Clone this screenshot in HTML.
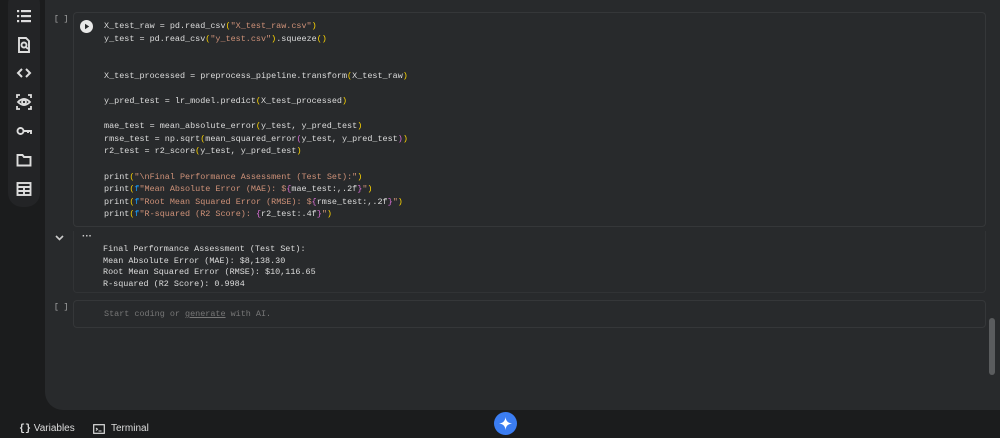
<!DOCTYPE html>
<html><head><style>
body{margin:0;width:1000px;height:438px;background:#1b1c1d;position:relative;overflow:hidden;font-family:"Liberation Sans",sans-serif}
.side{position:absolute;left:8px;top:-10px;width:32px;height:217px;background:#232426;border-radius:14px}
.ic{position:absolute;left:16px;width:16px;height:16px}
.main{position:absolute;left:45px;top:0;width:960px;height:410px;background:#282a2c;border-radius:0 0 0 18px}
.mono{font-family:"Liberation Mono",monospace;font-size:8.45px;color:#dcdcdc;white-space:pre}
.cell{position:absolute;left:73px;top:12px;width:911px;height:213px;border:1px solid #353739;border-radius:4px}
.code{position:absolute;left:104px;top:20px;line-height:12.55px}
.s{color:#ce9178}.y{color:#ffd700}.p{color:#da70d6}.b{color:#179fff}
.out{position:absolute;left:103px;top:244px;line-height:11.6px}
.br{position:absolute;font-family:"Liberation Mono",monospace;font-size:8px;color:#aaa}
</style></head><body>
<div class="side"></div>
<svg class="ic" style="top:8px" viewBox="0 0 16 16" fill="#ddd"><rect x="1" y="2" width="2.2" height="2.2"/><rect x="5" y="2" width="10" height="2.2"/><rect x="1" y="7" width="2.2" height="2.2"/><rect x="5" y="7" width="10" height="2.2"/><rect x="1" y="12" width="2.2" height="2.2"/><rect x="5" y="12" width="10" height="2.2"/></svg>
<svg class="ic" style="top:37px" viewBox="0 0 16 16" fill="none" stroke="#ddd" stroke-width="1.9"><path d="M3 1h7l3 3v11H3z"/><circle cx="8" cy="8" r="2.5"/><path d="M10 10l2 2"/></svg>
<svg class="ic" style="top:65px" viewBox="0 0 16 16" fill="none" stroke="#ddd" stroke-width="2"><path d="M6 4L2 8l4 4M10 4l4 4-4 4"/></svg>
<svg class="ic" style="top:94px" viewBox="0 0 16 16" fill="none" stroke="#ddd" stroke-width="1.8"><path d="M1 4V1h3M12 1h3v3M15 12v3h-3M4 15H1v-3"/><path d="M2 8q6-6 12 0q-6 6-12 0z"/><circle cx="8" cy="8" r="2"/></svg>
<svg class="ic" style="top:123px" viewBox="0 0 16 16" fill="none" stroke="#ddd" stroke-width="1.9"><circle cx="4.5" cy="8" r="3"/><path d="M7.5 8H15v3M12 8v2"/></svg>
<svg class="ic" style="top:152px" viewBox="0 0 16 16" fill="none" stroke="#ddd" stroke-width="1.9"><path d="M1.5 3h5l1.5 2h6.5v8.5h-13z"/></svg>
<svg class="ic" style="top:181px" viewBox="0 0 16 16" fill="none" stroke="#ddd" stroke-width="1.9"><rect x="1.5" y="2" width="13" height="12"/><path d="M1.5 6h13M1.5 10h13M8 6v8"/></svg>
<div class="main"></div>
<div class="br" style="left:54px;top:15px">[ ]</div>
<div class="cell"></div>
<svg style="position:absolute;left:80px;top:20px" width="13" height="13" viewBox="0 0 13 13"><circle cx="6.5" cy="6.5" r="6.5" fill="#e8e8e8"/><path d="M5 3.8v5.4l4.2-2.7z" fill="#282a2c"/></svg>
<div class="mono code">X_test_raw = pd.read_csv<span class="y">(</span><span class="s">"X_test_raw.csv"</span><span class="y">)</span>
y_test = pd.read_csv<span class="y">(</span><span class="s">"y_test.csv"</span><span class="y">)</span>.squeeze<span class="y">()</span>


X_test_processed = preprocess_pipeline.transform<span class="y">(</span>X_test_raw<span class="y">)</span>

y_pred_test = lr_model.predict<span class="y">(</span>X_test_processed<span class="y">)</span>

mae_test = mean_absolute_error<span class="y">(</span>y_test, y_pred_test<span class="y">)</span>
rmse_test = np.sqrt<span class="y">(</span>mean_squared_error<span class="p">(</span>y_test, y_pred_test<span class="p">)</span><span class="y">)</span>
r2_test = r2_score<span class="y">(</span>y_test, y_pred_test<span class="y">)</span>

print<span class="y">(</span><span class="s">"\nFinal Performance Assessment (Test Set):"</span><span class="y">)</span>
print<span class="y">(</span><span class="b">f</span><span class="s">"Mean Absolute Error (MAE): $</span><span class="p">{</span>mae_test:,.2f<span class="p">}</span><span class="s">"</span><span class="y">)</span>
print<span class="y">(</span><span class="b">f</span><span class="s">"Root Mean Squared Error (RMSE): $</span><span class="p">{</span>rmse_test:,.2f<span class="p">}</span><span class="s">"</span><span class="y">)</span>
print<span class="y">(</span><span class="b">f</span><span class="s">"R-squared (R2 Score): </span><span class="p">{</span>r2_test:.4f<span class="p">}</span><span class="s">"</span><span class="y">)</span></div>
<div style="position:absolute;left:73px;top:231px;width:911px;height:61px;border:1px solid #313335;border-top:none;border-radius:0 0 4px 4px"></div>
<svg style="position:absolute;left:55px;top:235px" width="9" height="6" viewBox="0 0 9 6"><path d="M1 1l3.5 3.5L8 1" stroke="#ccc" stroke-width="1.6" fill="none"/></svg>
<div style="position:absolute;left:82px;top:231px;color:#ccc;font-size:10px;font-weight:bold">···</div>
<div class="mono out">Final Performance Assessment (Test Set):
Mean Absolute Error (MAE): $8,138.30
Root Mean Squared Error (RMSE): $10,116.65
R-squared (R2 Score): 0.9984</div>
<div class="br" style="left:54px;top:303px">[ ]</div>
<div style="position:absolute;left:73px;top:300px;width:911px;height:26px;border:1px solid #353739;border-radius:4px"></div>
<div class="mono" style="position:absolute;left:104px;top:309px;color:#777">Start coding or <u>generate</u> with AI.</div>
<div style="position:absolute;left:989px;top:318px;width:6px;height:57px;background:#5a5c5e;border-radius:3px"></div>
<div style="position:absolute;left:19px;top:423px;color:#ddd;font-size:10px"><b style="font-family:'Liberation Mono';font-size:10px">{}</b> Variables</div>
<svg style="position:absolute;left:93px;top:424px" width="12" height="10" viewBox="0 0 12 10"><rect x=".7" y=".7" width="10.6" height="8.6" fill="none" stroke="#ddd" stroke-width="1.2"/><path d="M3 4l1.5 1.2L3 6.5M5.5 7h3" stroke="#ddd" fill="none"/></svg>
<div style="position:absolute;left:111px;top:423px;color:#ddd;font-size:10px">Terminal</div>
<div style="position:absolute;left:494px;top:412px;width:23px;height:23px;border-radius:50%;background:#3b7df2"></div>
<svg style="position:absolute;left:499px;top:417px" width="13" height="13" viewBox="0 0 12 12"><path d="M6 0Q6.5 5.5 12 6Q6.5 6.5 6 12Q5.5 6.5 0 6Q5.5 5.5 6 0z" fill="#fff"/></svg>
</body></html>
